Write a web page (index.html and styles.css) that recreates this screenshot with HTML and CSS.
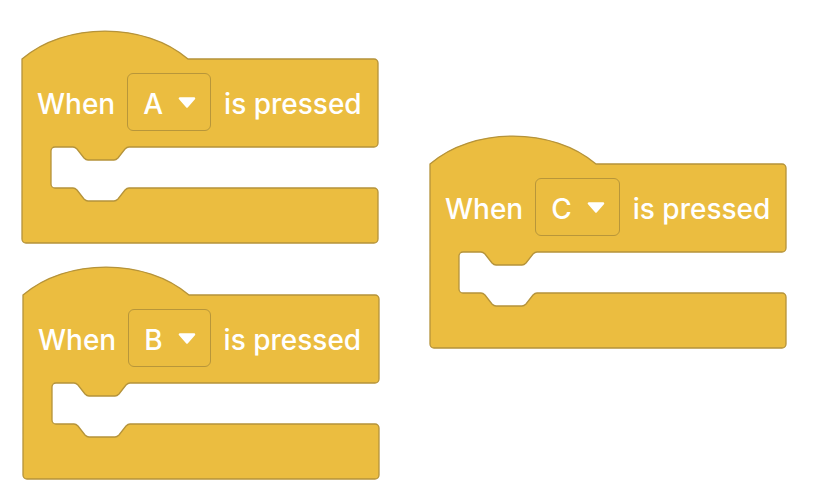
FILE: index.html
```html
<!DOCTYPE html>
<html>
<head>
<meta charset="utf-8">
<link rel="stylesheet" href="styles.css">
</head>
<body>
<div class="workspace">
  <div class="block block-a">
    <svg class="shape" width="356" height="212" viewBox="0 0 356 212"><path d="M0,28 C43,-9.3 123,-9.3 166,28 H352 A4,4 0 0 1 356,32 V112 A4,4 0 0 1 352,116 H107 C105,116 104,117 103,118 L96,127 C95,128 94,129 92,129 H66 C64,129 63,128 62,127 L55,118 C54,117 53,116 51,116 H33 A4,4 0 0 0 29,120 V153 A4,4 0 0 0 33,157 H51 C53,157 54,158 55,159 L62,168 C63,169 64,170 66,170 H92 C94,170 95,169 96,168 L103,159 C104,158 105,157 107,157 H352 A4,4 0 0 1 356,161 V208 A4,4 0 0 1 352,212 H4 A4,4 0 0 1 0,208 Z"/></svg>
    <div class="label">
      <span class="word">When</span>
      <span class="dropdown"><span class="key">A</span><svg class="arrow" width="18" height="11" viewBox="0 0 18 11"><path d="M2,1.5 H16 L9,9.5 Z"/></svg></span>
      <span class="word after">is pressed</span>
    </div>
  </div>
  <div class="block block-b">
    <svg class="shape" width="356" height="212" viewBox="0 0 356 212"><path d="M0,28 C43,-9.3 123,-9.3 166,28 H352 A4,4 0 0 1 356,32 V112 A4,4 0 0 1 352,116 H107 C105,116 104,117 103,118 L96,127 C95,128 94,129 92,129 H66 C64,129 63,128 62,127 L55,118 C54,117 53,116 51,116 H33 A4,4 0 0 0 29,120 V153 A4,4 0 0 0 33,157 H51 C53,157 54,158 55,159 L62,168 C63,169 64,170 66,170 H92 C94,170 95,169 96,168 L103,159 C104,158 105,157 107,157 H352 A4,4 0 0 1 356,161 V208 A4,4 0 0 1 352,212 H4 A4,4 0 0 1 0,208 Z"/></svg>
    <div class="label">
      <span class="word">When</span>
      <span class="dropdown"><span class="key">B</span><svg class="arrow" width="18" height="11" viewBox="0 0 18 11"><path d="M2,1.5 H16 L9,9.5 Z"/></svg></span>
      <span class="word after">is pressed</span>
    </div>
  </div>
  <div class="block block-c">
    <svg class="shape" width="356" height="212" viewBox="0 0 356 212"><path d="M0,28 C43,-9.3 123,-9.3 166,28 H352 A4,4 0 0 1 356,32 V112 A4,4 0 0 1 352,116 H107 C105,116 104,117 103,118 L96,127 C95,128 94,129 92,129 H66 C64,129 63,128 62,127 L55,118 C54,117 53,116 51,116 H33 A4,4 0 0 0 29,120 V153 A4,4 0 0 0 33,157 H51 C53,157 54,158 55,159 L62,168 C63,169 64,170 66,170 H92 C94,170 95,169 96,168 L103,159 C104,158 105,157 107,157 H352 A4,4 0 0 1 356,161 V208 A4,4 0 0 1 352,212 H4 A4,4 0 0 1 0,208 Z"/></svg>
    <div class="label">
      <span class="word">When</span>
      <span class="dropdown"><span class="key">C</span><svg class="arrow" width="18" height="11" viewBox="0 0 18 11"><path d="M2,1.5 H16 L9,9.5 Z"/></svg></span>
      <span class="word after">is pressed</span>
    </div>
  </div>
</div>
</body>
</html>
```
FILE: styles.css
```css
html, body {
  margin: 0;
  padding: 0;
  background: #ffffff;
}
.workspace {
  position: relative;
  width: 814px;
  height: 504px;
  overflow: hidden;
}
.block {
  position: absolute;
  width: 356px;
  height: 212px;
  font-family: Inter, "Noto Sans", sans-serif;
  font-weight: 500;
  font-size: 28px;
  color: #ffffff;
}
.block-a { left: 22px; top: 31px; }
.block-b { left: 23px; top: 267px; }
.block-c { left: 430px; top: 136px; }
.shape {
  position: absolute;
  left: 0;
  top: 0;
  overflow: visible;
}
.shape path {
  fill: #ebbd40;
  stroke: #b5933a;
  stroke-width: 1.3;
}
.label {
  position: relative;
  display: flex;
  align-items: center;
  gap: 12px;
  padding: 42px 0 0 15px;
}
.word {
  line-height: 1;
  white-space: nowrap;
  padding-top: 3px;
}
.word.after {
  margin-left: 1px;
}
.dropdown {
  display: flex;
  align-items: center;
  gap: 15px;
  height: 58px;
  box-sizing: border-box;
  padding: 0 14px 0 15px;
  border: 1.3px solid #b8963a;
  border-radius: 6px;
  background: #ebbd40;
}
.key {
  line-height: 1;
  padding-top: 3px;
}
.arrow path {
  fill: #ffffff;
  stroke: #ffffff;
  stroke-width: 2.5;
  stroke-linejoin: round;
}
```
